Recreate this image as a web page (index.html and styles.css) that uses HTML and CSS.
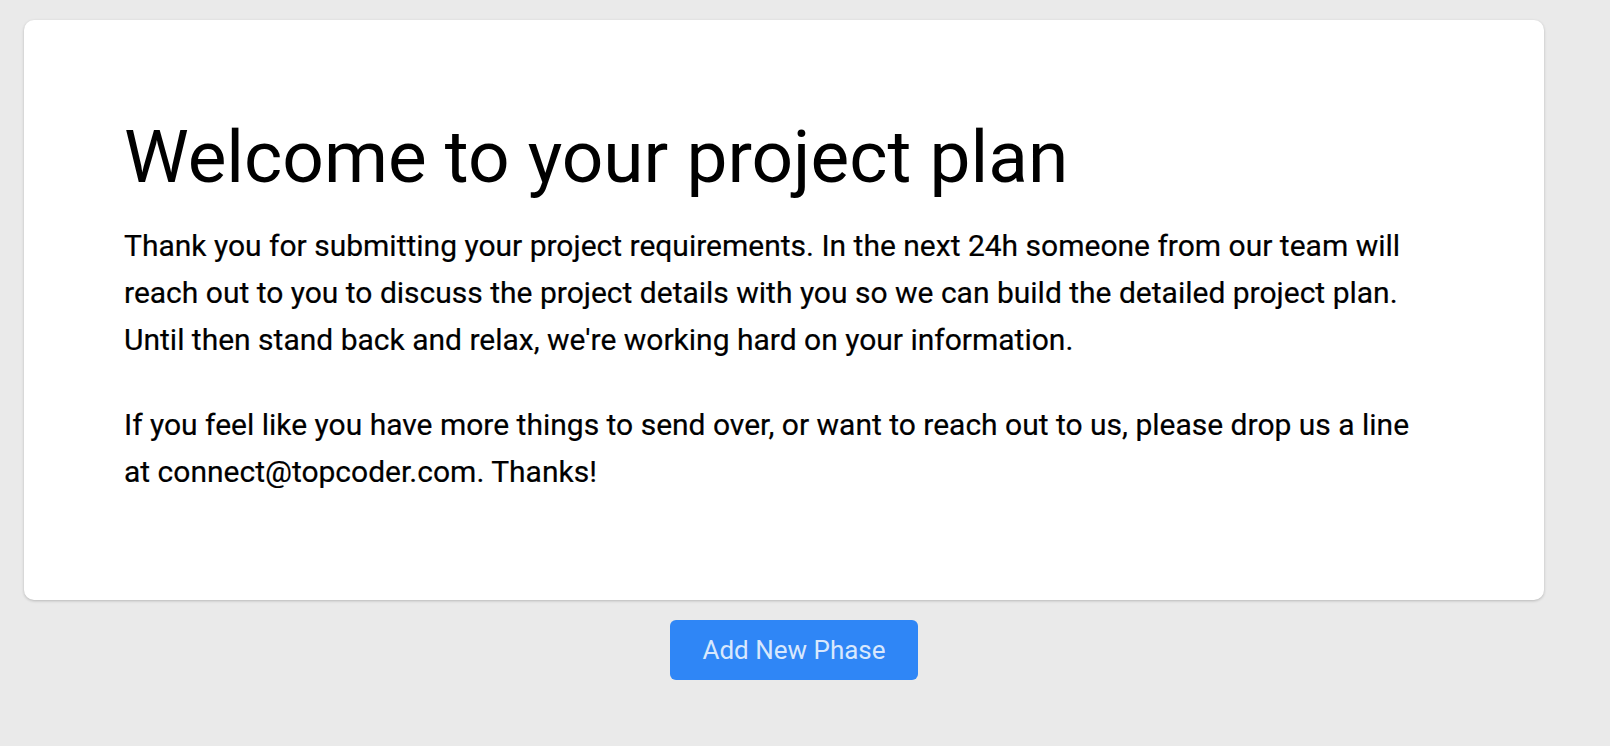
FILE: index.html
```html
<!DOCTYPE html>
<html lang="en">
<head>
<meta charset="utf-8">
<title>Project plan</title>
<link rel="stylesheet" href="styles.css">
</head>
<body>
<main class="page">
  <section class="card">
    <h1 class="title">Welcome to your project plan</h1>
    <p class="text">Thank you for submitting your project requirements. In the next 24h someone from our team will reach out to you to discuss the project details with you so we can build the detailed project plan. Until then stand back and relax, we're working hard on your information.</p>
    <p class="text">If you feel like you have more things to send over, or want to reach out to us, please drop us a line at connect@topcoder.com. Thanks!</p>
  </section>
  <div class="actions">
    <button class="btn" type="button">Add New Phase</button>
  </div>
</main>
</body>
</html>
```

FILE: styles.css
```css
html, body {
  margin: 0;
  padding: 0;
}
body {
  background: #eaeaea;
  font-family: Roboto, "Liberation Sans", Arial, sans-serif;
  color: #000;
  height: 746px;
}
.page {
  width: 1540px;
  padding: 20px 0 0 24px;
}
.card {
  width: 1520px;
  box-sizing: border-box;
  background: #fff;
  border-radius: 10px;
  box-shadow: 0 1px 3px rgba(0, 0, 0, 0.22);
  padding: 94px 110px 105px 100px;
}
.title {
  margin: 0 0 22px 0;
  font-size: 73px;
  font-weight: 400;
  line-height: 86px;
}
.text {
  margin: 0;
  font-size: 30px;
  line-height: 47px;
  -webkit-text-stroke: 0.2px #000;
}
.text + .text {
  margin-top: 38px;
}
.actions {
  display: flex;
  justify-content: center;
  padding-top: 20px;
}
.btn {
  width: 248px;
  height: 60px;
  border: none;
  border-radius: 6px;
  background: #2f86f6;
  color: #d8e8fd;
  font-family: Roboto, "Liberation Sans", Arial, sans-serif;
  font-size: 26px;
  font-weight: 400;
  cursor: pointer;
}
```
